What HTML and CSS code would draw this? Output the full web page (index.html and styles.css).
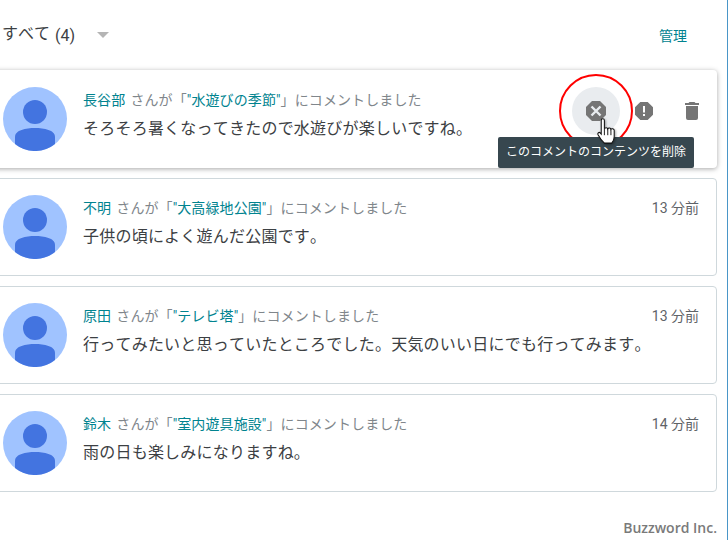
FILE: index.html
```html
<!DOCTYPE html>
<html>
  <head>
    <meta charset="utf-8">
    <link rel="stylesheet" href="styles.css">
  </head>
  <body>
    <svg class="defs" width="0" height="0">
      <symbol id="avatar" viewBox="0 0 64 64">
        <circle cx="32" cy="32" r="32" fill="#a0c3ff"/>
        <circle cx="32" cy="25" r="12" fill="#4374e0"/>
        <path d="M12 57V50c0-7 11-9 20-9s20 2 20 9v7a32 32 0 0 1-40 0z" fill="#4374e0"/>
      </symbol>
    </svg>
    <div class="page">
      <div class="toolbar">
        <div class="filter">
          <span class="filter-label">すべて</span>
          <span class="filter-count">(4)</span>
          <span class="arrow"></span>
        </div>
        <a class="manage">管理</a>
      </div>

      <div class="comment comment-active">
        <svg class="avatar"><use href="#avatar"/></svg>
        <div class="body">
          <p class="meta"><span class="link">長谷部</span> さんが「<span class="link">"水遊びの季節"</span>」にコメントしました</p>
          <p class="text">そろそろ暑くなってきたので水遊びが楽しいですね。</p>
        </div>
        <div class="actions">
          <span class="action action-hover">
            <svg width="24" height="24" viewBox="0 0 24 24"><path d="M8 2h8l6 6v8l-6 6H8l-6-6V8z" fill="#757575"/><path d="M7.500 7.500l9 9m0-9l-9 9" stroke="#e9ecef" stroke-width="2.400" fill="none"/></svg>
          </span>
          <span class="action">
            <svg width="24" height="24" viewBox="0 0 24 24"><path d="M8.300 3h7.400L21 8.300v7.400L15.700 21H8.300L3 15.700V8.300z" fill="#757575"/><path d="M11 7h2v6.500h-2zM11 15h2v2h-2z" fill="#fff"/></svg>
          </span>
          <span class="action">
            <svg width="24" height="24" viewBox="0 0 24 24"><path d="M6 19a2 2 0 0 0 2 2h8a2 2 0 0 0 2-2V7H6zM19 4h-3.500l-1-1h-5l-1 1H5v2h14z" fill="#757575"/></svg>
          </span>
        </div>
      </div>

      <div class="comment">
        <svg class="avatar"><use href="#avatar"/></svg>
        <div class="body">
          <p class="meta"><span class="link">不明</span> さんが「<span class="link">"大高緑地公園"</span>」にコメントしました</p>
          <p class="text">子供の頃によく遊んだ公園です。</p>
        </div>
        <span class="time">13 分前</span>
      </div>

      <div class="comment">
        <svg class="avatar"><use href="#avatar"/></svg>
        <div class="body">
          <p class="meta"><span class="link">原田</span> さんが「<span class="link">"テレビ塔"</span>」にコメントしました</p>
          <p class="text">行ってみたいと思っていたところでした。天気のいい日にでも行ってみます。</p>
        </div>
        <span class="time">13 分前</span>
      </div>

      <div class="comment">
        <svg class="avatar"><use href="#avatar"/></svg>
        <div class="body">
          <p class="meta"><span class="link">鈴木</span> さんが「<span class="link">"室内遊具施設"</span>」にコメントしました</p>
          <p class="text">雨の日も楽しみになりますね。</p>
        </div>
        <span class="time">14 分前</span>
      </div>

      <div class="credit">Buzzword Inc.</div>
    </div>

    <!-- annotation + tooltip sit over the first card -->
    <div class="ring"></div>
    <div class="tooltip">このコメントのコンテンツを削除</div>
    <svg class="cursor" width="19" height="27" viewBox="0 0 18 25">
      <path d="M4 2c0-2 3-2 3 0v8c.5-1.500 3-1.500 3.200 0 .6-1.300 2.800-1.200 3 .4.700-1 3-.7 3.100 1v6.100c0 2.500-1 4.300-2.300 6H7c-2.200-2-4.500-5.200-6-8-.7-1.500 1-2.800 2-1.700l1 1.200z" fill="#fff" stroke="#111" stroke-width="1"/>
      <path d="M7 10v6M10.200 10v6M13.200 10.500V16" stroke="#111" stroke-width=".9" fill="none"/>
    </svg>
  </body>
</html>
```

FILE: styles.css
```css
* {
  margin: 0;
  padding: 0;
  box-sizing: border-box;
}
html, body {
  height: 100%;
}
body {
  background-color: #fff;
  font-family: Roboto, "Noto Sans CJK JP", sans-serif;
  font-kerning: none;
  text-spacing-trim: space-all;
  color: #3c4043;
  overflow: hidden;
}
.defs {
  position: absolute;
}
.page {
  height: 540px;
  width: 728px;
  display: flex;
  flex-direction: column;
  border-right: 1px solid #4a96c8;
}
.toolbar {
  height: 70px;
  display: flex;
  align-items: center;
  justify-content: space-between;
  padding: 0 40px 0 2px;
  flex-shrink: 0;
}
.filter {
  display: flex;
  align-items: center;
  font-size: 16px;
}
.filter-label {
  margin-top: -6px;
}
.filter-count {
  margin-left: 5px;
}
.arrow {
  margin-left: 22px;
  border-left: 6px solid transparent;
  border-right: 6px solid transparent;
  border-top: 6px solid #b5b5b5;
}
.manage {
  font-size: 14px;
  color: #00838f;
}
.comment {
  height: 98px;
  width: 727px;
  margin-left: -10px;
  flex-shrink: 0;
  margin-bottom: 10px;
  padding: 16px 17px 0 12px;
  background-color: #fff;
  border: 1px solid #cfd8dc;
  border-radius: 4px;
  display: flex;
  align-items: flex-start;
}
.comment-active {
  border: none;
  padding-top: 17px;
  padding-left: 13px;
  box-shadow: 0 1px 5px rgba(0, 0, 0, 0.35);
}
.avatar {
  width: 64px;
  height: 64px;
  flex-shrink: 0;
}
.body {
  flex: 1;
  margin-left: 16px;
  padding-top: 4px;
}
.meta {
  font-size: 14px;
  line-height: 18px;
  color: #80868b;
  word-spacing: 1.500px;
  letter-spacing: 0.100px;
}
.link {
  color: #00838f;
}
.text {
  font-size: 16px;
  line-height: 22px;
  margin-top: 9px;
  letter-spacing: 0.220px;
}
.time {
  font-size: 14px;
  line-height: 18px;
  margin-top: 4px;
  color: #5f6368;
}
.actions {
  display: flex;
  align-items: center;
  margin-right: -16px;
}
.action {
  width: 48px;
  height: 48px;
  border-radius: 50%;
  display: flex;
  align-items: center;
  justify-content: center;
}
.action-hover {
  background-color: #e9ecef;
}
.credit {
  margin-top: auto;
  padding: 0 10px 3px 0;
  text-align: right;
  font-family: "Open Sans", sans-serif;
  font-size: 14px;
  font-weight: 600;
  color: #7a7a7a;
}
.ring {
  position: absolute;
  left: 559px;
  top: 74px;
  width: 74px;
  height: 74px;
  border: 2.500px solid #f00;
  border-radius: 50%;
}
.tooltip {
  position: absolute;
  left: 498px;
  top: 137px;
  width: 196px;
  height: 31px;
  background-color: #37474f;
  border-radius: 2px;
  color: #fff;
  font-size: 12px;
  line-height: 31px;
  text-align: center;
}
.cursor {
  position: absolute;
  left: 597px;
  top: 118px;
  filter: drop-shadow(1px 1px 1px rgba(0, 0, 0, 0.35));
}
```
